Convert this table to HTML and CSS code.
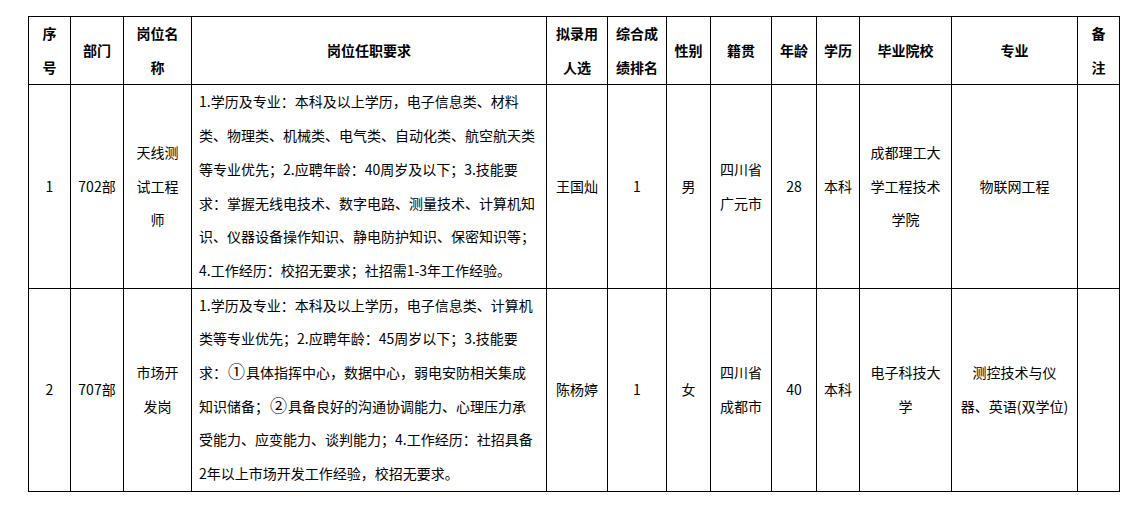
FILE: index.html
```html
<!DOCTYPE html>
<html lang="zh-CN">
<head>
<meta charset="utf-8">
<title>拟录用人员公示</title>
<link rel="stylesheet" href="styles.css">
</head>
<body>
<div class="page">
<table class="roster">
<colgroup>
<col class="c-no"><col class="c-dept"><col class="c-post"><col class="c-req"><col class="c-name"><col class="c-rank"><col class="c-sex"><col class="c-home"><col class="c-age"><col class="c-edu"><col class="c-school"><col class="c-major"><col class="c-note">
</colgroup>
<thead>
<tr class="head-row">
<th>序<br>号</th>
<th>部门</th>
<th>岗位名<br>称</th>
<th>岗位任职要求</th>
<th>拟录用<br>人选</th>
<th>综合成<br>绩排名</th>
<th>性别</th>
<th>籍贯</th>
<th>年龄</th>
<th>学历</th>
<th>毕业院校</th>
<th>专业</th>
<th>备<br>注</th>
</tr>
</thead>
<tbody>
<tr class="row-1">
<td>1</td>
<td>702部</td>
<td>天线测<br>试工程<br>师</td>
<td class="req">1.学历及专业：本科及以上学历，电子信息类、材料<br>类、物理类、机械类、电气类、自动化类、航空航天类<br>等专业优先；2.应聘年龄：40周岁及以下；3.技能要<br>求：掌握无线电技术、数字电路、测量技术、计算机知<br>识、仪器设备操作知识、静电防护知识、保密知识等；<br>4.工作经历：校招无要求；社招需1-3年工作经验。</td>
<td>王国灿</td>
<td>1</td>
<td>男</td>
<td>四川省<br>广元市</td>
<td>28</td>
<td>本科</td>
<td>成都理工大<br>学工程技术<br>学院</td>
<td>物联网工程</td>
<td></td>
</tr>
<tr class="row-2">
<td>2</td>
<td>707部</td>
<td>市场开<br>发岗</td>
<td class="req">1.学历及专业：本科及以上学历，电子信息类、计算机<br>类等专业优先；2.应聘年龄：45周岁以下；3.技能要<br>求：<span class="circ">①</span>具体指挥中心，数据中心，弱电安防相关集成<br>知识储备；<span class="circ">②</span>具备良好的沟通协调能力、心理压力承<br>受能力、应变能力、谈判能力；4.工作经历：社招具备<br>2年以上市场开发工作经验，校招无要求。</td>
<td>陈杨婷</td>
<td>1</td>
<td>女</td>
<td>四川省<br>成都市</td>
<td>40</td>
<td>本科</td>
<td>电子科技大<br>学</td>
<td>测控技术与仪<br>器、英语(双学位)</td>
<td></td>
</tr>
</tbody>
</table>
</div>
</body>
</html>
```
FILE: styles.css
```css
html, body {
  margin: 0;
  padding: 0;
  background: #ffffff;
}

.page {
  padding: 16px 0 0 28px;
  font-family: "Noto Sans CJK SC", "Noto Sans", sans-serif;
  color: #000;
}

.roster {
  border-collapse: collapse;
  table-layout: fixed;
  width: 1091px;
  font-size: 14px;
  line-height: 33.7px;
}

.roster th,
.roster td {
  border: 1px solid #000;
  padding: 0 4px;
  text-align: center;
  vertical-align: middle;
  white-space: nowrap;
  overflow: hidden;
}

.roster th {
  font-weight: 700;
  font-size: 14px;
}

.head-row { height: 68px; }
.row-1 { height: 203px; }
.row-2 { height: 202px; }

.roster td.req {
  text-align: left;
  padding: 0 4px 0 7px;
}

.circ {
  font-size: 17px;
  line-height: 1;
  margin: 0 1px;
}

.c-no { width: 42px; }
.c-dept { width: 53px; }
.c-post { width: 68px; }
.c-req { width: 355px; }
.c-name { width: 61px; }
.c-rank { width: 59px; }
.c-sex { width: 44px; }
.c-home { width: 61px; }
.c-age { width: 45px; }
.c-edu { width: 43px; }
.c-school { width: 92px; }
.c-major { width: 126px; }
.c-note { width: 42px; }
```
